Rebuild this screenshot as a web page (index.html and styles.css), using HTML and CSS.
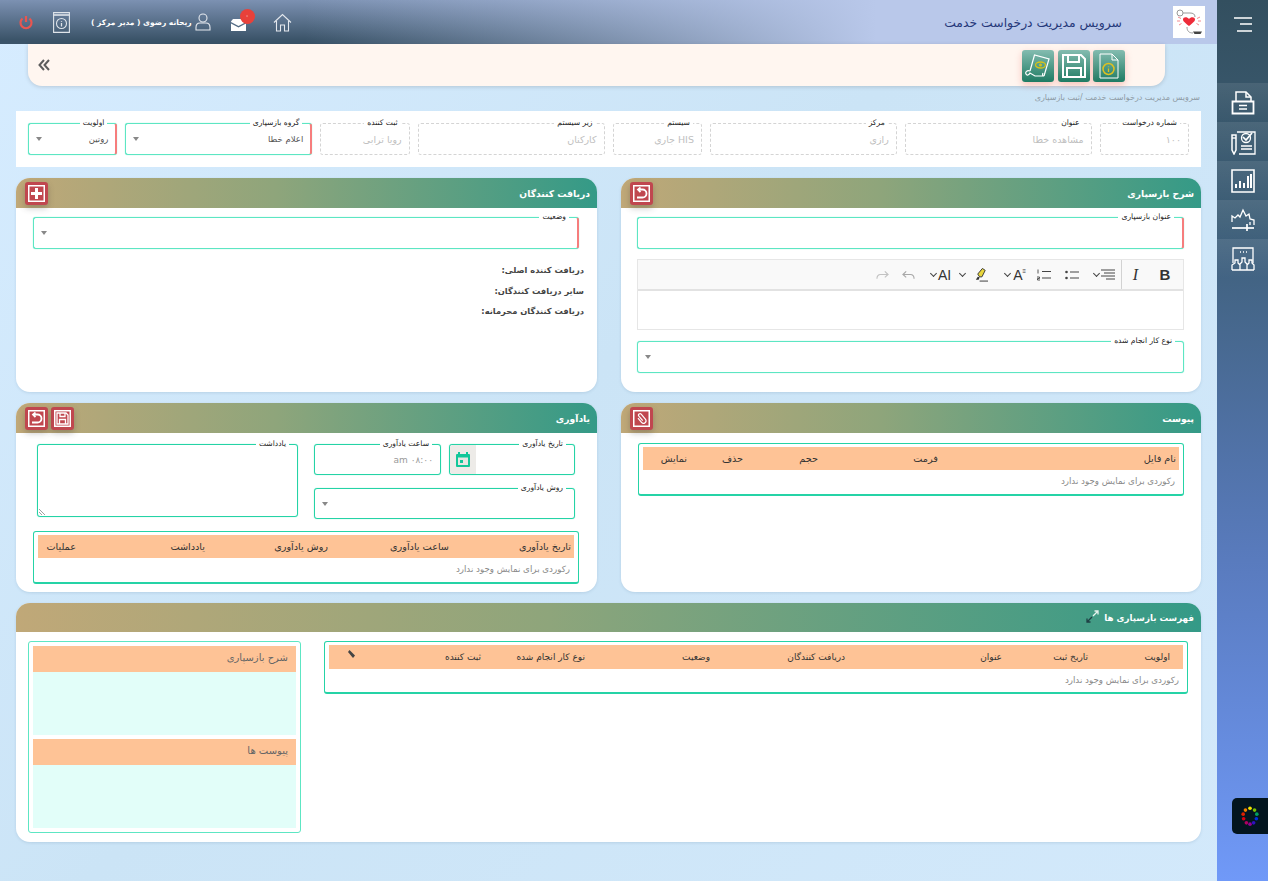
FILE: index.html
```html
<!DOCTYPE html>
<html lang="fa" dir="rtl">
  <head>
    <meta charset="UTF-8" />
    <title>سرویس مدیریت درخواست خدمت</title>
    <link rel="stylesheet" href="styles.css">
  </head>
  <body>
    <aside class="sidebar">
      <div class="side-top">
        <svg class="burger" width="20" height="15" viewBox="0 0 20 15"><path d="M1 1h18M7 7h12M4 14h15" stroke="#fff" stroke-width="1.700"/></svg>
      </div>
      <a class="side-item">
        <svg width="24" height="24" viewBox="0 0 24 24" fill="none" stroke="#fff" stroke-width="1.500"><path d="M5 10V1h10l5 5v4"/><path d="M15 1v5h5"/><path d="M1.500 10.500h21v12h-21z" stroke-width="1.800"/><path d="M8 14.500h8M8 18h8"/></svg>
      </a>
      <a class="side-item">
        <svg width="26" height="26" viewBox="0 0 26 26" fill="none" stroke="#fff" stroke-width="1.300"><path d="M7 3h18v22H9"/><circle cx="16" cy="9" r="4.500"/><path d="M13 8l3 3 6-7" stroke-width="1.700"/><path d="M11 17h11M11 20h11"/><path d="M2 6h4v15l-2 4-2-4z" stroke-width="1.500"/><path d="M2 9h4"/></svg>
      </a>
      <a class="side-item">
        <svg width="24" height="24" viewBox="0 0 24 24" fill="none" stroke="#fff"><path d="M1 1h22v22H1z" stroke-width="1.600"/><path d="M5 19v-4M9 19v-7M13 19v-5M17 19V7M20 19V5" stroke-width="2"/></svg>
      </a>
      <a class="side-item">
        <svg width="26" height="24" viewBox="0 0 26 24" fill="none" stroke="#fff" stroke-width="1.300"><path d="M2 14V8l3 2 3-3 2 2 3-7 3 6 3-2 1 5 4 1v5"/><path d="M2 20h22" stroke-width="1.700"/><path d="M17 16v7" stroke-width="1.700"/><path d="M20 14v3"/></svg>
      </a>
      <a class="side-item">
        <svg width="26" height="26" viewBox="0 0 26 26" fill="none" stroke="#fff" stroke-width="1.300"><path d="M3 17V2h20v15"/><path d="M10 6h1M13 6h1M16 6h1"/><path d="M2 24v-5l3-2v-3h3v3l2 2v5M10 24v-6l2-2v-4h3v4l2 2v6M17 24v-5l2-2v-3h3v3l2 2v5M2 24h22"/></svg>
      </a>
      <button class="theme-btn" type="button">
        <svg width="20" height="22" viewBox="0 0 22 24"><circle cx="11" cy="3.500" r="2" fill="#f5e400"/><circle cx="16" cy="5.500" r="2" fill="#7ac000"/><circle cx="18.500" cy="10" r="2" fill="#00a060"/><circle cx="18" cy="15" r="2" fill="#0030e0"/><circle cx="15" cy="19.500" r="2" fill="#3010c0"/><circle cx="11" cy="21" r="2" fill="#900090"/><circle cx="7" cy="19.500" r="2" fill="#b00060"/><circle cx="4" cy="15" r="2" fill="#d80010"/><circle cx="3.500" cy="10" r="2" fill="#e02000"/><circle cx="6" cy="5.500" r="2" fill="#f08000"/></svg>
      </button>
    </aside>

    <div class="main">
      <header class="topbar">
        <div class="logo">
          <svg width="32" height="32" viewBox="0 0 32 32" fill="none"><circle cx="7" cy="7" r="3" stroke="#999"/><path d="M10 7h7c3 0 5 1 5 4" stroke="#999"/><path d="M16 20C11 16 10 15 10 13.500 10 11 14 10.500 16 13c2-2.500 6-2 6 .5 0 1.500-1 2.500-6 6.500z" fill="#ee2c3a"/><path d="M5 11l3 1.500M4 15h3M6 19l2.500-1.500M27 11l-3 1.500M28 15h-3M26 19l-2.500-1.500" stroke="#f3898f"/><path d="M14 21c0 4 2 6 6 6" stroke="#999"/><path d="M20 25.500h9l-1.500 2.500h-6z" fill="#444"/></svg>
        </div>
        <h1 class="app-title">سرویس مدیریت درخواست خدمت</h1>
        <div class="top-tools">
          <svg class="t-home" width="19" height="19" viewBox="0 0 19 19" fill="none" stroke="#e4e8ee" stroke-width="1.100"><path d="M1 9.500L9.500 1.500 18 9.500"/><path d="M3.500 8v10h4v-6h4v6h4V8"/></svg>
          <div class="mail">
            <svg width="15" height="12" viewBox="0 0 15 12"><path d="M0 2.500L2 0h11l2 2.500v.5L7.500 7 0 3z" fill="#fff"/><path d="M0 4.500l7.500 4 7.500-4V12H0z" fill="#fff"/></svg>
            <span class="badge">۰</span>
          </div>
          <div class="user">
            <svg width="16" height="18" viewBox="0 0 16 18" fill="none" stroke="#e4e8ee" stroke-width="1.100"><circle cx="8" cy="5" r="4"/><path d="M1 17v-2.500c0-3 2-4.500 4-4.500h6c2 0 4 1.500 4 4.500V17z"/></svg>
            <span>ریحانه رضوی ( مدیر مرکز )</span>
          </div>
          <svg class="t-info" width="17" height="21" viewBox="0 0 17 21" fill="none" stroke="#dfe4ea" stroke-width="1.100"><path d="M.6.600h15.800v19.800H.6z"/><path d="M.6 3h15.800" stroke-width="1.600"/><circle cx="8.500" cy="11.500" r="5"/><path d="M8.500 9v.8M8.500 11v3.500" stroke-width="1.300"/></svg>
          <svg class="t-power" width="14" height="15" viewBox="0 0 14 15" fill="none" stroke="#e85650" stroke-width="2.200"><path d="M7 1v6"/><path d="M3.500 3.500a5.500 5.500 0 1 0 7 0"/></svg>
        </div>
      </header>

      <div class="toolbar">
        <button class="green-btn" type="button">
          <svg width="20" height="26" viewBox="0 0 20 26" fill="none" stroke="#fff" stroke-width="1"><path d="M1 1h12l6 6v18H1z"/><path d="M13 1v6h6"/><circle cx="9.500" cy="16" r="5.500" stroke="#e0c020" stroke-width="1.500"/><path d="M9.500 13.500v.8M9.500 15.500v3.500" stroke="#e0c020" stroke-width="1.300"/></svg>
        </button>
        <button class="green-btn" type="button">
          <svg width="26" height="26" viewBox="0 0 26 26" fill="none" stroke="#fff" stroke-width="2"><path d="M2 2h18l4 4v18H2z"/><path d="M7 2v7h11V2M6 24v-9h14v9"/></svg>
        </button>
        <button class="green-btn" type="button">
          <svg width="26" height="26" viewBox="0 0 26 26" fill="none" stroke="#fff" stroke-width="1.200"><path d="M5 18L9.500 2 24 6l-5 17"/><path d="M5 18c-3-1-5 1-4 3 1 2 3 1 4-1l5 3h9c-1 0-2-1-1-3"/><ellipse cx="15.500" cy="12" rx="5" ry="3" stroke="#d6c21a" stroke-width="1.300"/><circle cx="15.500" cy="12" r="1.500" fill="#d6c21a" stroke="none"/></svg>
        </button>
        <svg class="chevrons" width="12" height="12" viewBox="0 0 12 12" fill="none" stroke="#5c5c5c" stroke-width="2"><path d="M6 1L1.500 6 6 11M11 1L6.500 6l4.500 5"/></svg>
      </div>

      <div class="crumb">سرویس مدیریت درخواست خدمت /ثبت بازسپاری</div>

      <section class="request-info">
        <div class="field dashed span1"><label>شماره درخواست</label><span class="val muted">۱۰۰</span></div>
        <div class="field dashed span2"><label>عنوان</label><span class="val muted">مشاهده خطا</span></div>
        <div class="field dashed span2"><label>مرکز</label><span class="val muted">رازی</span></div>
        <div class="field dashed span1"><label>سیستم</label><span class="val muted">HIS جاری</span></div>
        <div class="field dashed span2"><label>زیر سیستم</label><span class="val muted">کارکنان</span></div>
        <div class="field dashed span1"><label>ثبت کننده</label><span class="val muted">رویا ترابی</span></div>
        <div class="field required span2"><label>گروه بازسپاری</label><span class="val">اعلام خطا</span><i class="caret"></i></div>
        <div class="field required span1"><label>اولویت</label><span class="val">روتین</span><i class="caret"></i></div>
      </section>

      <div class="two-cols row-a">
        <section class="card">
          <div class="card-head">
            <h2>شرح بازسپاری</h2>
            <div class="head-btns">
              <button class="red-btn" type="button"><svg width="13" height="13" viewBox="0 0 13 13" fill="none" stroke="#fff" stroke-width="1.800"><path d="M4 2.500h3.500a4 4 0 0 1 0 8H2"/><path d="M5.500.500L3 2.500l2.500 2.500"/></svg></button>
            </div>
          </div>
          <div class="card-body desc-body">
            <div class="field required"><label>عنوان بازسپاری</label></div>
            <div class="editor">
              <div class="ed-bar">
                <span class="ed-b">B</span>
                <span class="ed-i">I</span>
                <span class="ed-sep"></span>
                <span class="ed-tool m-align"><svg width="14" height="11" viewBox="0 0 14 11" stroke="#444"><path d="M0 1h14M3 4h11M0 7h14M5 10h9"/></svg><i class="chev"></i></span>
                <span class="ed-tool m-bullets"><svg width="14" height="10" viewBox="0 0 14 10" stroke="#444" stroke-width="1.200"><path d="M5 2h9M5 8h9"/><circle cx="1.500" cy="2" r="1.300" fill="#444" stroke="none"/><circle cx="1.500" cy="8" r="1.300" fill="#444" stroke="none"/></svg></span>
                <span class="ed-tool m-numbers"><svg width="14" height="12" viewBox="0 0 14 12" stroke="#444" stroke-width="1.200"><path d="M5 2.500h9M5 9h9"/><path d="M1 .500v4M0 8h2.500v1.500H.5V11h2.500" stroke-width=".9" fill="none"/></svg></span>
                <span class="ed-tool m-size"><span class="ed-a">A<sup class="lines">≡</sup></span><i class="chev"></i></span>
                <span class="ed-tool m-pen"><svg width="14" height="16" viewBox="0 0 15 16" fill="none"><path d="M6 10L4 7l5-6 3 2-3.500 7z" fill="#e8d53a" stroke="#333"/><path d="M4 10l-2 3h3l1-2.500z" fill="#333"/><path d="M6 14.500h9" stroke="#333"/></svg><i class="chev"></i></span>
                <span class="ed-tool m-ai"><span class="ed-a">AI</span><i class="chev"></i></span>
                <span class="ed-tool m-undo"><svg width="13" height="10" viewBox="0 0 14 10" fill="none" stroke="#a8a8a8" stroke-width="1.200"><path d="M4.500 1L1 4.500 4.500 7.500"/><path d="M1 4.500h8c2.500 0 4 1.500 4 4.500"/></svg></span>
                <span class="ed-tool m-redo"><svg width="13" height="10" viewBox="0 0 14 10" fill="none" stroke="#c2c2c2" stroke-width="1.200"><path d="M9.500 1L13 4.500 9.500 7.500"/><path d="M13 4.500H5C2.500 4.500 1 6 1 9"/></svg></span>
              </div>
              <div class="ed-text"></div>
            </div>
            <div class="field"><label>نوع کار انجام شده</label><i class="caret"></i></div>
          </div>
        </section>

        <section class="card">
          <div class="card-head">
            <h2>دریافت کنندگان</h2>
            <div class="head-btns">
              <button class="red-btn" type="button"><svg width="13" height="13" viewBox="0 0 13 13"><path d="M5 1h3v4h4v3H8v4H5V8H1V5h4z" fill="#fff"/></svg></button>
            </div>
          </div>
          <div class="card-body recv-body">
            <div class="field required"><label>وضعیت</label><i class="caret"></i></div>
            <ul class="recv-list">
              <li>دریافت کننده اصلی:</li>
              <li>سایر دریافت کنندگان:</li>
              <li>دریافت کنندگان محرمانه:</li>
            </ul>
          </div>
        </section>
      </div>

      <div class="two-cols row-b">
        <section class="card">
          <div class="card-head">
            <h2>پیوست</h2>
            <div class="head-btns">
              <button class="red-btn" type="button"><svg width="13" height="13" viewBox="0 0 13 13" fill="none" stroke="#fff" stroke-width="1.200"><path transform="rotate(-40 6.500 6.500)" d="M4 4v5.500a2.500 2.500 0 0 0 5 0V3a1.500 1.500 0 0 0-3 0v6"/></svg></button>
            </div>
          </div>
          <div class="card-body attach-body">
            <div class="grid-box">
              <div class="grid-row grid-head cols-attach">
                <span>نام فایل</span><span>فرمت</span><span>حجم</span><span>حذف</span><span>نمایش</span>
              </div>
              <div class="grid-empty">رکوردی برای نمایش وجود ندارد</div>
            </div>
          </div>
        </section>

        <section class="card">
          <div class="card-head">
            <h2>یادآوری</h2>
            <div class="head-btns">
              <button class="red-btn" type="button"><svg width="13" height="13" viewBox="0 0 13 13" fill="none" stroke="#fff" stroke-width="1.300"><path d="M1 1h9l2 2v9H1z"/><path d="M4 1v3.500h5V1M3.500 12V7.500h6V12"/></svg></button>
              <button class="red-btn" type="button"><svg width="13" height="13" viewBox="0 0 13 13" fill="none" stroke="#fff" stroke-width="1.800"><path d="M4 2.500h3.500a4 4 0 0 1 0 8H2"/><path d="M5.500.500L3 2.500l2.500 2.500"/></svg></button>
            </div>
          </div>
          <div class="card-body remind-body">
            <div class="remind-form">
              <div class="field solid date-f"><label>تاریخ یادآوری</label>
                <span class="cal"><svg width="14" height="17" viewBox="0 0 14 17"><path d="M1 3h12a1 1 0 0 1 1 1v11a1 1 0 0 1-1 1H1a1 1 0 0 1-1-1V4a1 1 0 0 1 1-1z" fill="#12c79a"/><path d="M2 6.500h10V14H2z" fill="#e8e6e3"/><path d="M3 1v3M11 1v3" stroke="#12c79a" stroke-width="2"/><path d="M4 9h3v3H4z" fill="#12c79a"/></svg></span>
              </div>
              <div class="field solid time-f"><label>ساعت یادآوری</label><span class="val muted2">۰۸:۰۰ am</span></div>
              <div class="field solid note-f"><label>یادداشت</label>
                <svg class="grip" width="7" height="7" viewBox="0 0 7 7" stroke="#888" stroke-width=".8"><path d="M0 1l6 6M0 4l3 3"/></svg>
              </div>
              <div class="field solid method-f"><label>روش یادآوری</label><i class="caret"></i></div>
            </div>
            <div class="grid-box">
              <div class="grid-row grid-head cols-remind">
                <span>تاریخ یادآوری</span><span>ساعت یادآوری</span><span>روش یادآوری</span><span>یادداشت</span><span>عملیات</span>
              </div>
              <div class="grid-empty">رکوردی برای نمایش وجود ندارد</div>
            </div>
          </div>
        </section>
      </div>

      <section class="card card-full">
        <div class="card-head">
          <h2>فهرست بازسپاری ها</h2>
          <svg class="expand" width="13" height="13" viewBox="0 0 13 13" fill="none" stroke="#1f3f44" stroke-width="1.300"><path d="M7 6l5-5M8.500 1H12v3.500" stroke="#e8f2ee"/><path d="M6 7l-5 5M1 8.500V12h3.500"/></svg>
        </div>
        <div class="card-body list-body">
          <div class="grid-box list-box">
            <div class="grid-row grid-head cols-list">
              <span>اولویت</span><span>تاریخ ثبت</span><span>عنوان</span><span>دریافت کنندگان</span><span>وضعیت</span><span>نوع کار انجام شده</span><span>ثبت کننده</span>
              <span class="clip-col"><svg width="9" height="10" viewBox="0 0 9 10"><path d="M1 3l1.500-2L8 6.500 6 9z" fill="#444"/></svg></span>
            </div>
            <div class="grid-empty">رکوردی برای نمایش وجود ندارد</div>
          </div>
          <div class="grid-box detail-box">
            <div class="detail-head">شرح بازسپاری</div>
            <div class="detail-text"></div>
            <div class="detail-head">پیوست ها</div>
            <div class="detail-text"></div>
          </div>
        </div>
      </section>
    </div>
  </body>
</html>
```
FILE: styles.css
```css
* {
  margin: 0;
  padding: 0;
  box-sizing: border-box;
}

body {
  font-family: "DejaVu Sans", "Noto Sans", sans-serif;
  font-size: 9px;
  color: #333;
  height: 100vh;
  overflow: hidden;
  display: flex;
  background: linear-gradient(135deg, #d6ecff 0%, #cbe4f6 45%, #d3e9fb 100%);
}

/* sidebar */
.sidebar {
  width: 51px;
  flex: none;
  display: flex;
  flex-direction: column;
  background: linear-gradient(180deg, #334f5f 0%, #3e5f78 25%, #5a7cc0 65%, #7099f8 100%);
}

.side-top {
  height: 83px;
  padding-top: 17px;
  text-align: center;
}

.side-item {
  height: 39px;
  display: flex;
  align-items: center;
  justify-content: center;
  background: linear-gradient(180deg, rgba(255, 255, 255, 0.09), rgba(255, 255, 255, 0));
}

.theme-btn {
  width: 36px;
  height: 36px;
  margin-top: 520px;
  align-self: flex-start;
  border: none;
  border-radius: 5px 0 0 5px;
  background: #03151f;
  display: flex;
  align-items: center;
  justify-content: center;
}

/* main column */
.main {
  flex: 1;
  min-width: 0;
}

.topbar {
  height: 44px;
  display: flex;
  align-items: center;
  padding-right: 12px;
  background:
    linear-gradient(90deg, rgba(185, 200, 234, 0) 25%, #b9c8ea 72%),
    linear-gradient(180deg, #7c91b2 0%, #3b5469 90%);
}

.logo {
  width: 32px;
  height: 32px;
  background: #fff;
}

.app-title {
  font-size: 12.400px;
  font-weight: normal;
  color: #26397a;
  margin-right: 51px;
}

.top-tools {
  margin-right: auto;
  display: flex;
  align-items: center;
  color: #fff;
  padding-left: 19px;
}

.t-home {
  margin-left: 27px;
}

.mail {
  position: relative;
  margin: 5px 0 0 20px;
  height: 12px;
  width: 15px;
}

.badge {
  position: absolute;
  top: -10px;
  left: 9px;
  width: 15px;
  height: 15px;
  border-radius: 50%;
  background: #e8413a;
  color: #fff;
  font-size: 7px;
  text-align: center;
  line-height: 15px;
}

.user {
  display: flex;
  align-items: center;
  gap: 3px;
  font-size: 7.500px;
  font-weight: bold;
  margin-left: 21px;
}

.t-info {
  margin-left: 20px;
}

/* action strip */
.toolbar {
  height: 42px;
  margin: 0 52px 0 28px;
  padding: 6px 40px 0 10px;
  display: flex;
  gap: 3.500px;
  background: #fff6f0;
  border-radius: 0 0 14px 14px;
  box-shadow: 0 1px 4px rgba(0, 0, 0, 0.15);
}

.chevrons {
  align-self: center;
  margin: -6px auto 0 0;
}

.green-btn {
  width: 32px;
  height: 32px;
  border: none;
  border-radius: 3px;
  display: flex;
  align-items: center;
  justify-content: center;
  background: linear-gradient(180deg, #84bcb0 0%, #1f7b63 100%);
  box-shadow: 0 3px 7px rgba(240, 130, 120, 0.45);
}

.crumb {
  height: 25px;
  padding: 7px 17px 0 0;
  font-size: 8px;
  color: #8e9aa4;
}

/* fields */
.field {
  position: relative;
  height: 32px;
  border: 1px solid #5de6c3;
  border-radius: 3px;
  background: #fff;
  box-shadow: 0 0 1px #5de6c3;
  display: flex;
  align-items: center;
  padding: 0 7px;
}

.field label {
  position: absolute;
  top: -6px;
  right: 8px;
  padding: 0 3px;
  background: #fff;
  font-size: 7.600px;
  line-height: 10px;
  color: #222;
}

.field.required {
  border-right: 2px solid #f67d7d;
}

.field.dashed {
  border: 1px dashed #d4d4d4;
  box-shadow: none;
}

.field.solid {
  border-color: #25d3a6;
}

.val {
  font-size: 8.500px;
  color: #555;
}

.muted {
  color: #c0c0c0;
  font-size: 9.500px;
}

.muted2 {
  color: #999;
  font-size: 9px;
}

.caret {
  position: absolute;
  left: 7px;
  top: 13px;
  border: 3px solid transparent;
  border-top: 4px solid #888;
  border-bottom: none;
}

.request-info {
  height: 56px;
  margin: 0 16px;
  padding: 12px;
  background: #fff;
  display: grid;
  grid-template-columns: repeat(12, 1fr);
  gap: 8px;
}

.span1 {
  grid-column: span 1;
}

.span2 {
  grid-column: span 2;
}

/* cards */
.two-cols {
  margin: 11px 16px 0;
  display: grid;
  grid-template-columns: 580px 581px;
  gap: 24px;
}

.row-a .card {
  height: 214px;
}

.row-b .card {
  height: 189px;
}

.card {
  background: #fff;
  border-radius: 14px;
  box-shadow: 0 1px 3px rgba(90, 130, 160, 0.2);
}

.card-head {
  height: 30px;
  padding: 0 7px 0 9px;
  display: flex;
  align-items: center;
  gap: 5px;
  border-radius: 14px 14px 0 0;
  background: linear-gradient(270deg, #349a87 0%, #8ea57b 55%, #c0a878 100%);
}

.card-head h2 {
  font-size: 9.200px;
  font-weight: bold;
  color: #fff;
}

.head-btns {
  margin-right: auto;
  display: flex;
  gap: 3px;
}

.red-btn {
  width: 23px;
  height: 23px;
  border: 3px solid #c0474f;
  border-radius: 3px;
  background: #c0474f;
  box-shadow: 0 3px 6px rgba(60, 60, 60, 0.3), inset 0 0 0 1.500px #fff;
  display: flex;
  align-items: center;
  justify-content: center;
}

/* editor */
.desc-body {
  padding: 9px 17px 0 16px;
}

.editor {
  margin: 10px 0 11px;
  border: 1px solid #e6e6e6;
}

.ed-bar {
  height: 31px;
  background: #f9f9f9;
  border-bottom: 2px solid #e2e2e2;
  display: flex;
  align-items: center;
  color: #333;
}

.ed-b {
  width: 36px;
  text-align: center;
  font-family: "Liberation Sans", sans-serif;
  font-weight: bold;
  font-size: 15px;
}

.ed-i {
  width: 25px;
  padding-left: 2px;
  text-align: center;
  font-family: "Liberation Serif", serif;
  font-style: italic;
  font-size: 16px;
}

.ed-sep {
  width: 1px;
  height: 29px;
  background: #d2d2d2;
}

.ed-tool {
  display: flex;
  align-items: center;
  gap: 2px;
}

.m-align {
  margin-right: 6px;
}

.m-bullets {
  margin-right: 15px;
}

.m-numbers {
  margin-right: 14px;
}

.m-size {
  margin-right: 11px;
  gap: 3px;
}

.m-pen {
  margin-right: 17px;
  gap: 9px;
}

.m-ai {
  margin-right: 9px;
}

.m-undo {
  margin-right: 16px;
}

.m-redo {
  margin-right: 13px;
}

.ed-a {
  font-family: "Liberation Sans", sans-serif;
  font-size: 14px;
  line-height: 1;
  direction: ltr;
}

.lines {
  font-size: 6px;
  vertical-align: top;
  line-height: 1;
}

.chev {
  width: 5px;
  height: 5px;
  border-left: 1px solid #444;
  border-bottom: 1px solid #444;
  transform: rotate(-45deg);
  margin-top: -2px;
}

.ed-text {
  height: 38px;
  background: #fff;
}

/* recipients */
.recv-body {
  padding: 9px 18px 0 17px;
}

.recv-list {
  list-style: none;
  margin: 11px -5px 0 0;
}

.recv-list li {
  height: 20.500px;
  line-height: 20px;
  font-size: 8.300px;
  font-weight: bold;
  color: #444;
}

/* grids */
.grid-box {
  border: 1px solid #25d3a6;
  border-bottom-width: 2px;
  border-radius: 3px;
  padding: 3px 4px 0;
  background: #fff;
  height: 53px;
}

.grid-row {
  display: grid;
  align-items: center;
}

.grid-head {
  height: 23px;
  background: #fec396;
  color: #333;
  font-size: 9.700px;
}

.grid-head span {
  padding-right: 3px;
}

.cols-attach {
  grid-template-columns: 238px 120px 75px 56px 1fr;
}

.cols-remind {
  grid-template-columns: 122px 121px 123px 129px 1fr;
}

.cols-list {
  grid-template-columns: 82px 86px 157px 135px 125px 104px 1fr;
  height: 24px;
  font-size: 9px;
}

.cols-list span {
  padding-right: 13px;
}

.grid-empty {
  height: 24px;
  line-height: 22px;
  padding-right: 4px;
  font-size: 8.700px;
  color: #888;
}

.attach-body {
  padding: 10px 17px 0;
}

.remind-body {
  padding: 11px 22px 0 17px;
}

.remind-form {
  display: grid;
  grid-template-columns: 126px 127px 0 261px;
  grid-template-rows: 31px 31px;
  column-gap: 8px;
  row-gap: 13px;
}

.remind-form .field {
  height: auto;
}

.time-f {
  grid-column: 2;
}

.note-f {
  grid-column: 4;
  grid-row: 1 / 3;
  height: 73px !important;
}

.method-f {
  grid-column: 1 / 3;
}

.cal {
  position: absolute;
  left: 0;
  top: 0;
  bottom: 0;
  width: 26px;
  background: #edebe8;
  display: flex;
  align-items: center;
  justify-content: center;
  border-radius: 3px 0 0 3px;
}

.grip {
  position: absolute;
  left: 1px;
  bottom: 1px;
}

.remind-body > .grid-box {
  margin: 12px -4px 0 0;
}

/* list card */
.card-full {
  height: 239px;
  margin: 11px 16px 0;
}

.card-full .card-head {
  height: 29px;
}

.card-full .card-head h2 {
  font-size: 8.700px;
}

.expand {
  margin-bottom: 2px;
}

.list-body {
  padding: 9px 13px 0 12px;
  display: flex;
  gap: 23px;
  align-items: flex-start;
}

.list-box {
  flex: 1;
  position: relative;
}

.clip-col {
  position: absolute;
  left: 22px;
  top: 7px;
  padding: 0 !important;
}

.detail-box {
  width: 273px;
  height: 192px;
  flex: none;
  padding: 4px;
  border-bottom-width: 1px;
  border-color: #5de6c3;
}

.detail-head {
  height: 26px;
  line-height: 24px;
  padding-right: 8px;
  background: #fec396;
  font-size: 10px;
  color: #666;
}

.detail-text {
  height: 63px;
  background: #e2fef9;
  margin-bottom: 4px;
}

.detail-text:last-child {
  margin-bottom: 0;
}
```
